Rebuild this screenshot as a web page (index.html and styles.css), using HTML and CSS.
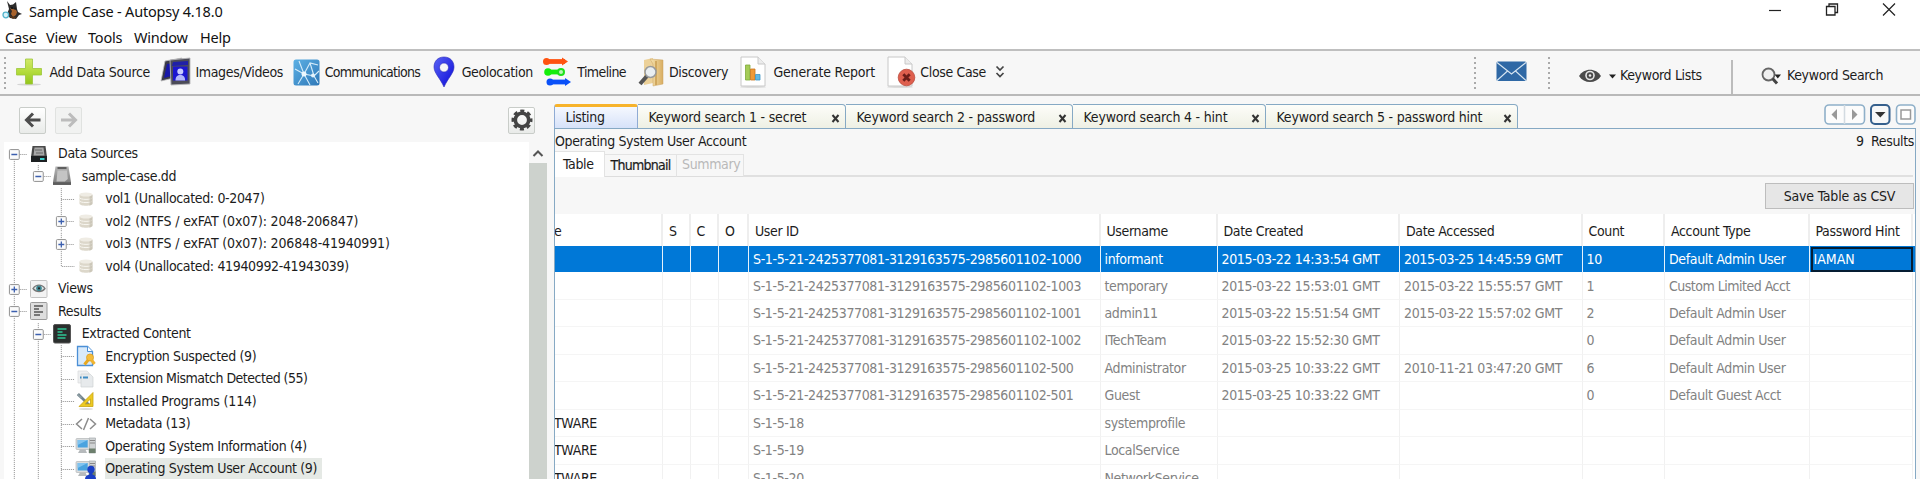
FILE: index.html
```html
<!DOCTYPE html>
<html lang="en">
<head>
<meta charset="utf-8">
<title>Sample Case - Autopsy 4.18.0</title>
<link rel="stylesheet" href="styles.css">
</head>
<body>
<svg class="defs" aria-hidden="true">
  <defs>
    <linearGradient id="gGreen" x1="0" y1="0" x2="0" y2="1"><stop offset="0" stop-color="#d2e96a"/><stop offset=".5" stop-color="#b4dc3c"/><stop offset="1" stop-color="#93c51c"/></linearGradient>
    <linearGradient id="gSky" x1="0" y1="0" x2="1" y2="1"><stop offset="0" stop-color="#5cb0e4"/><stop offset="1" stop-color="#2f78b8"/></linearGradient>
    <linearGradient id="gPin" x1="0" y1="0" x2="1" y2="1"><stop offset="0" stop-color="#5a62f4"/><stop offset="1" stop-color="#0a0ad8"/></linearGradient>
    <linearGradient id="gFold" x1="0" y1="0" x2="1" y2="0"><stop offset="0" stop-color="#f6e3b0"/><stop offset="1" stop-color="#d9ae62"/></linearGradient>
    <linearGradient id="gDisk" x1="0" y1="0" x2="0" y2="1"><stop offset="0" stop-color="#b5b5b5"/><stop offset="1" stop-color="#777"/></linearGradient>
    <symbol id="t-v" viewBox="0 0 24 22.5"><path class="dot" d="M10.5 0V22.5"/></symbol>
    <symbol id="t-tee" viewBox="0 0 24 22.5"><path class="dot" d="M10.5 0V22.5M10.5 11.5H24"/></symbol>
    <symbol id="t-end" viewBox="0 0 24 22.5"><path class="dot" d="M10.5 0V11.5H24"/></symbol>
    <symbol id="t-box" viewBox="0 0 24 22.5"><path class="dot" d="M16 11.5H24"/><rect x="5.5" y="6.5" width="10" height="10" rx="1" fill="#fbfbfb" stroke="#8f8f8f"/><path d="M7.500 11.5H13.5" stroke="#3c5fae" stroke-width="1.3"/></symbol>
    <symbol id="t-first" viewBox="0 0 24 22.5"><path class="dot" d="M10.5 16V22.5"/><use href="#t-box"/></symbol>
    <symbol id="t-minus" viewBox="0 0 24 22.5"><path class="dot" d="M10.5 0V22.5"/><use href="#t-box"/></symbol>
    <symbol id="t-last" viewBox="0 0 24 22.5"><path class="dot" d="M10.5 0V7"/><use href="#t-box"/></symbol>
    <symbol id="t-plus" viewBox="0 0 24 22.5"><path class="dot" d="M10.5 0V22.5"/><use href="#t-box"/><path d="M10.5 8.5V14.5" stroke="#3c5fae" stroke-width="1.3"/></symbol>
    <symbol id="i-vol" viewBox="0 0 22 22"><path d="M4.500 6.500v9c0 3 13 3 13 0v-9" fill="#dcd7ca"/><ellipse cx="11" cy="6.500" rx="6.500" ry="2" fill="#efece4"/><path d="M4.500 9.500c0 2.500 13 2.500 13 0M4.500 12.700c0 2.500 13 2.500 13 0" fill="none" stroke="#f8f6f0"/><path d="M17.500 7v8.500c0 1-1.500 1.800-3 2V8.700z" fill="#c2bcae" opacity=".6"/></symbol>
    <symbol id="i-pc" viewBox="0 0 22 22"><path d="M14 3h6.500v15h-6.500z" fill="#d0d3d4" stroke="#a5aaad" stroke-width=".7"/><path d="M14.500 5.500h5.500M14.500 8h5.500" stroke="#888"/><rect x="1" y="3.500" width="13.500" height="11" rx="1" fill="#d9dcdd" stroke="#a9adaf" stroke-width=".6"/><rect x="2.700" y="5" width="10" height="7.500" fill="#4aa3df"/><path d="M2.700 5h10l-10 5z" fill="#80c3ef"/><path d="M5 14.500h5.500l1.500 3.500H3z" fill="#b6babc"/><path d="M14 13.500h6.500v4.500h-6.500z" fill="#6d7f6d"/></symbol>
  </defs>
</svg>
<div class="window">
  <header class="titlebar">
    <svg class="dog" width="20" height="20" viewBox="0 0 20 20"><path d="M5 1l3 4 3-.5L14 2l1 7 1 3 4 2-3 1-3 4-6-1-3-4 2-5z" fill="#2c2b2b"/><path d="M8 8l2 3-1 3 2 3 3-2 1-3-1-2z" fill="#a8622c"/><path d="M9 8h2M12.500 8.500h1" stroke="#111" stroke-width="1.500"/><path d="M7 16l8 1-4 2z" fill="#5a3518"/><circle cx="3.800" cy="15" r="2.800" fill="#d9f3fa" stroke="#54b4cc" stroke-width="1.300"/></svg>
    <span class="title">Sample Case - Autopsy 4.18.0</span>
    <div class="winbtns">
      <svg width="14" height="16" viewBox="0 0 14 16"><path d="M1 10.500H13" stroke="#222" stroke-width="1.200"/></svg>
      <svg width="14" height="16" viewBox="0 0 14 16"><path d="M1.500 6.500h8.500v8.500h-8.500zM4 6.500V4h8.500v8.500H10" fill="none" stroke="#222" stroke-width="1.300"/></svg>
      <svg width="14" height="16" viewBox="0 0 14 16"><path d="M1 3.500L13 15.500M13 3.500L1 15.500" stroke="#222" stroke-width="1.200"/></svg>
    </div>
  </header>
  <nav class="menubar"><span class="m1">Case</span><span class="m2">View</span><span class="m3">Tools</span><span class="m4">Window</span><span class="m5">Help</span></nav>

  <div class="toolbar">
    <i class="grip"></i>
    <div class="tools">
      <div class="tool w1"><svg width="26" height="30" viewBox="0 0 26 30"><ellipse cx="13" cy="27.500" rx="12" ry="1" fill="#d5d5d5"/><path d="M9.500 2h7v9.500h9v6.500h-9v9h-7v-9h-9v-6.500h9z" fill="url(#gGreen)" stroke="#9cc63a" stroke-width=".8"/></svg><span>Add Data Source</span></div>
      <div class="tool w2"><svg width="32" height="32" viewBox="0 0 32 32"><path d="M5 5L22 2l-4 19L1 25z" fill="#3a3a48" stroke="#bbb" stroke-width=".8"/><path d="M7 8L18 6 15 19 4 22z" fill="#1717a8"/><path d="M10 4L30 2 30 28 11 29z" fill="#4c4c58" stroke="#b5b5b9" stroke-width=".9"/><path d="M13 6L28 5V9L12 10z" fill="#2020a8"/><rect x="13" y="10.500" width="14.500" height="14" fill="#1c16d0"/><circle cx="20.300" cy="15.500" r="3" fill="#c9ccff"/><path d="M15.500 24.500c0-4 2-5.500 4.800-5.500s4.800 1.500 4.800 5.500z" fill="#b4b8fb"/></svg><span>Images/Videos</span></div>
      <div class="tool w3"><svg width="27" height="30" viewBox="0 0 27 30"><rect x=".5" y="2.500" width="26" height="26" rx="2.500" fill="url(#gSky)"/><path d="M2 12l9 5 6-11 8 2M11 17l-6 10M11 17l10 2 4 7M17 6l4 13 5-5M11 17L6 4M11 17l6 11" fill="none" stroke="#d5ecfa" stroke-width="1.100"/><circle cx="11" cy="17" r="2.500" fill="#eef8fe"/><circle cx="20" cy="18.500" r="2" fill="#e4f3fc"/></svg><span>Communications</span></div>
      <div class="tool w4"><svg width="22" height="32" viewBox="0 0 22 32"><path fill-rule="evenodd" d="M11 1C5 1 1 5 1 11c0 6 6 11 10 20 4-9 10-14 10-20C21 5 17 1 11 1zM11 7a4.500 4.500 0 1 1 0 9 4.500 4.500 0 0 1 0-9z" fill="url(#gPin)" stroke="#2828b8" stroke-width=".6"/></svg><span>Geolocation</span></div>
      <div class="tool w5"><svg width="28" height="32" viewBox="0 0 28 32"><g stroke-width="4.800" fill="none"><path d="M3 5.500H22" stroke="#ff5310"/><path d="M5 16H18" stroke="#15ee0c"/><path d="M6 26H24" stroke="#0a50f8"/></g><path d="M19 1.500l6 4-6 4z" fill="#ff5310"/><path d="M22 22l6 4-6 4z" fill="#0a50f8"/><circle cx="3.500" cy="5.500" r="3.500" fill="#ff5310"/><circle cx="5" cy="16" r="3.800" fill="#15ee0c"/><circle cx="18" cy="16" r="3" fill="#b9f6b5" stroke="#1ee01a" stroke-width="2"/><circle cx="7" cy="26" r="3.500" fill="#0a50f8"/></svg><span>Timeline</span></div>
      <div class="tool w6"><svg width="28" height="32" viewBox="0 0 28 32"><path d="M6 4l9-2v25l-9 2z" fill="#ecd199"/><path d="M12 3l13 1v24l-10 2V8z" fill="url(#gFold)" stroke="#caa360" stroke-width=".5"/><path d="M18 5v24" stroke="#c99c50" stroke-width="1.500"/><path d="M9 20l-7 8" stroke="#555" stroke-width="4"/><circle cx="12.500" cy="16" r="5.500" fill="#e9eef1" stroke="#989a9c" stroke-width="1.500"/></svg><span>Discovery</span></div>
      <div class="tool w7"><svg width="26" height="32" viewBox="0 0 26 32"><ellipse cx="13" cy="31" rx="13" ry="1" fill="#ddd"/><path d="M1 1h17l7 7v22H1z" fill="#fff" stroke="#c8c8c8"/><path d="M18 1v7h7" fill="#ececec" stroke="#c8c8c8"/><path d="M5.500 9h4.500v15h-4.500z" fill="#a5cc57" stroke="#7fa93a" stroke-width=".8"/><path d="M10.500 13h4.500v11h-4.500z" fill="#f09a38" stroke="#c97720" stroke-width=".8"/><path d="M15.500 18.500h4.500V24h-4.500z" fill="#62b8e4" stroke="#3f95c3" stroke-width=".8"/></svg><span>Generate Report</span></div>
      <div class="tool w8"><svg width="29" height="32" viewBox="0 0 29 32"><ellipse cx="13" cy="31" rx="13" ry="1" fill="#ddd"/><path d="M1 1h17l7 7v22H1z" fill="#fff" stroke="#c8c8c8"/><path d="M18 1v7h7" fill="#ececec" stroke="#c8c8c8"/><circle cx="19.500" cy="21.500" r="8.300" fill="#df5f4e" stroke="#b94a3c" stroke-width=".8"/><path d="M16.300 18.300l6.400 6.400M22.700 18.300l-6.400 6.400" stroke="#6c1d18" stroke-width="2.800"/></svg><span>Close Case</span></div>
    </div>
    <svg class="more" width="10" height="14" viewBox="0 0 10 14"><path d="M1.500 1.500l3.500 3.500 3.500-3.500M1.500 8l3.500 3.500 3.500-3.500" fill="none" stroke="#444" stroke-width="1.700"/></svg>
    <div class="toolright">
      <i class="grip"></i>
      <svg class="mail" width="31" height="21" viewBox="0 0 31 21"><rect x=".5" y=".5" width="30" height="19.500" rx="1.500" fill="#2f68a5"/><path d="M1 1.500L15.500 13 30 1.500M1 19.500l10.500-9.500M30 19.500L19.500 10" fill="none" stroke="#d8e6f2" stroke-width="1.100"/></svg>
      <i class="grip"></i>
      <svg class="eye" width="38" height="14" viewBox="0 0 38 14"><path d="M0 7C5-1.500 17-1.500 22 7 17 15 5 15 0 7z" fill="#4a4a4a"/><circle cx="11" cy="6.500" r="4.800" fill="#e5e5e5"/><circle cx="11" cy="6.500" r="3.200" fill="#4a4a4a"/><circle cx="11" cy="6.500" r="1.300" fill="#eee"/><path d="M30 5.500h7L33.500 9.500z" fill="#222"/></svg>
      <span class="kwl">Keyword Lists</span>
      <i class="sep"></i>
      <svg class="mag" width="21" height="18" viewBox="0 0 21 18"><circle cx="7.500" cy="7.500" r="6" fill="#f0f0f0" stroke="#666" stroke-width="1.800"/><path d="M11.500 11.500l4.500 5" stroke="#444" stroke-width="3"/><path d="M13.500 7.500h6.500L16.800 11.500z" fill="#222"/></svg>
      <span class="kws">Keyword Search</span>
    </div>
  </div>

  <main class="main">
    <section class="left">
      <div class="navrow">
        <button class="sq"><svg width="26" height="26" viewBox="0 0 26 26"><path d="M20.500 13H7M13 6.500L6.500 13l6.500 6.500" fill="none" stroke="#4d4d4d" stroke-width="3"/></svg></button>
        <button class="sq off"><svg width="26" height="26" viewBox="0 0 26 26"><path d="M5 13H19M13 6.500L19.500 13l-6.500 6.500" fill="none" stroke="#bcbcbc" stroke-width="3"/></svg></button>
        <button class="sq gear"><svg width="26" height="26" viewBox="0 0 26 26"><circle cx="13" cy="13" r="9" fill="none" stroke="#444" stroke-width="3" stroke-dasharray="4 3.070" stroke-dashoffset="2"/><circle cx="13" cy="13" r="6.700" fill="none" stroke="#444" stroke-width="3.600"/></svg></button>
      </div>
      <div class="treewrap">
        <div class="tree">
          <div class="row"><svg class="g"><use href="#t-first"/></svg><svg class="ic" viewBox="0 0 22 22"><path d="M4.500 3h13l1.500 11H3z" fill="#4a4a4a"/><path d="M6.500 4.500h9l1 8H5.500z" fill="#a8a8a8"/><path d="M3 13h16v6H3z" fill="#1d2022"/><path d="M12 16h4.500" stroke="#3fd0cc" stroke-width="2"/><path d="M7 7h7M8 10h7" stroke="#666"/></svg><span>Data Sources</span></div>
          <div class="row"><svg class="g"><use href="#t-v"/></svg><svg class="g"><use href="#t-last"/></svg><svg class="ic" viewBox="0 0 22 22"><path d="M4.500 1.500h13L20 17v3H2v-3z" fill="url(#gDisk)"/><path d="M6.500 3h9" stroke="#444" stroke-width="1.500"/><path d="M6.500 5.500h9.500l.8 8.500-3 2.500H5.500z" fill="#c4c4c4"/><path d="M2 18.500h18" stroke="#5d5d5d" stroke-width="2.500"/></svg><span>sample-case.dd</span></div>
          <div class="row"><svg class="g"><use href="#t-v"/></svg><svg class="g"></svg><svg class="g"><use href="#t-tee"/></svg><svg class="ic"><use href="#i-vol"/></svg><span>vol1 (Unallocated: 0-2047)</span></div>
          <div class="row"><svg class="g"><use href="#t-v"/></svg><svg class="g"></svg><svg class="g"><use href="#t-plus"/></svg><svg class="ic"><use href="#i-vol"/></svg><span class="wide">vol2 (NTFS / exFAT (0x07): 2048-206847)</span></div>
          <div class="row"><svg class="g"><use href="#t-v"/></svg><svg class="g"></svg><svg class="g"><use href="#t-plus"/></svg><svg class="ic"><use href="#i-vol"/></svg><span class="wide">vol3 (NTFS / exFAT (0x07): 206848-41940991)</span></div>
          <div class="row"><svg class="g"><use href="#t-v"/></svg><svg class="g"></svg><svg class="g"><use href="#t-end"/></svg><svg class="ic"><use href="#i-vol"/></svg><span>vol4 (Unallocated: 41940992-41943039)</span></div>
          <div class="row"><svg class="g"><use href="#t-plus"/></svg><svg class="ic" viewBox="0 0 22 22"><rect x="2.500" y="2.500" width="16.500" height="17" rx="1" fill="#f3f3f3" stroke="#c3c3c3"/><path d="M5 10.500c3-4.500 9-4.500 12 0-3 4-9 4-12 0z" fill="#dfe6e6" stroke="#777" stroke-width="1.300"/><circle cx="11" cy="10.300" r="2.800" fill="#3d8792"/><circle cx="11" cy="10.300" r="1.100" fill="#222"/></svg><span>Views</span></div>
          <div class="row"><svg class="g"><use href="#t-minus"/></svg><svg class="ic" viewBox="0 0 22 22"><rect x="2.500" y="2.500" width="16.500" height="17" rx="1" fill="#dedede" stroke="#9b9b9b"/><path d="M6 6h9M6 9h5M6 12h9M6 15h6" stroke="#555" stroke-width="1.600"/></svg><span>Results</span></div>
          <div class="row"><svg class="g"><use href="#t-v"/></svg><svg class="g"><use href="#t-minus"/></svg><svg class="ic" viewBox="0 0 22 22"><rect x="2.500" y="1.500" width="17" height="18.500" rx="1.500" fill="#2b2e2d" stroke="#555"/><path d="M6.500 6h9M6.500 9h5M6.500 12h9M6.500 15h8" stroke="#2fc795" stroke-width="1.700"/></svg><span>Extracted Content</span></div>
          <div class="row"><svg class="g"><use href="#t-v"/></svg><svg class="g"><use href="#t-v"/></svg><svg class="g"><use href="#t-tee"/></svg><svg class="ic" viewBox="0 0 22 22"><path d="M2.500 1.500h10l5 5v14h-15z" fill="#d9eafa" stroke="#4b8fd6" stroke-width="1.300"/><path d="M12.500 1.500v5h5" fill="#fff" stroke="#4b8fd6"/><path d="M14 14l-4.500 5.500" stroke="#e8a820" stroke-width="3"/><circle cx="15" cy="12.500" r="3.500" fill="#f4bd3c" stroke="#e0a020" stroke-width=".8"/><path d="M16.500 15l3 4" stroke="#f0b430" stroke-width="3"/></svg><span>Encryption Suspected (9)</span></div>
          <div class="row"><svg class="g"><use href="#t-v"/></svg><svg class="g"><use href="#t-v"/></svg><svg class="g"><use href="#t-tee"/></svg><svg class="ic" viewBox="0 0 22 22"><path d="M3 3h9l2 2v10H3z" fill="#eef0f1" stroke="#d8dadb" stroke-width=".7"/><path d="M6 6h9l3 3v10H6z" fill="#e7eaec" stroke="#cfd2d4" stroke-width=".7"/><path d="M5 9.500h1.500M8 9.500h5" stroke="#3f8cc4" stroke-width="2"/></svg><span class="tight">Extension Mismatch Detected (55)</span></div>
          <div class="row"><svg class="g"><use href="#t-v"/></svg><svg class="g"><use href="#t-v"/></svg><svg class="g"><use href="#t-tee"/></svg><svg class="ic" viewBox="0 0 22 22"><ellipse cx="11" cy="19" rx="7" ry="1" fill="#ddd"/><path d="M3 4l12 12" stroke="#71838b" stroke-width="2.600"/><path fill-rule="evenodd" d="M18 2.500v14H4zM15.500 9v5H10z" fill="#ecc922" stroke="#c9a514" stroke-width=".8"/><path d="M2.500 4.500l4 3.500" stroke="#8b9ba2" stroke-width="2"/></svg><span class="wide">Installed Programs (114)</span></div>
          <div class="row"><svg class="g"><use href="#t-v"/></svg><svg class="g"><use href="#t-v"/></svg><svg class="g"><use href="#t-tee"/></svg><svg class="ic" viewBox="0 0 22 22"><path d="M7 6l-5.500 5L7 16M15 6l5.500 5-5.500 5M13.500 5L8.500 17" fill="none" stroke="#8c8c8c" stroke-width="1.500"/></svg><span>Metadata (13)</span></div>
          <div class="row"><svg class="g"><use href="#t-v"/></svg><svg class="g"><use href="#t-v"/></svg><svg class="g"><use href="#t-tee"/></svg><svg class="ic"><use href="#i-pc"/></svg><span>Operating System Information (4)</span></div>
          <div class="row"><svg class="g"><use href="#t-v"/></svg><svg class="g"><use href="#t-v"/></svg><svg class="g"><use href="#t-tee"/></svg><svg class="ic" viewBox="0 0 22 22"><use href="#i-pc"/><circle cx="16" cy="11.500" r="3.700" fill="#1a3fc4"/><path d="M10 21.500c0-4 3-5 6-5s5 1 5 5z" fill="#1a3fc4"/><path d="M14.500 14h3v4h-3z" fill="#1a3fc4"/></svg><span class="sel">Operating System User Account (9)</span></div>
        </div>
        <div class="scroll"><svg width="18" height="21" viewBox="0 0 18 21"><path d="M4.500 14l4.500-4.500 4.500 4.500" fill="none" stroke="#555" stroke-width="2"/></svg></div>
      </div>
    </section>

    <section class="right">
      <div class="tabs">
        <div class="tab active"><span>Listing</span></div>
        <div class="tab k1"><span>Keyword search 1 - secret</span><svg width="9" height="9" viewBox="0 0 9 9"><path d="M1.500 1l6 7M7.500 1l-6 7" stroke="#333" stroke-width="2"/></svg></div>
        <div class="tab k2"><span>Keyword search 2 - password</span><svg width="9" height="9" viewBox="0 0 9 9"><path d="M1.500 1l6 7M7.500 1l-6 7" stroke="#333" stroke-width="2"/></svg></div>
        <div class="tab k3"><span>Keyword search 4 - hint</span><svg width="9" height="9" viewBox="0 0 9 9"><path d="M1.500 1l6 7M7.500 1l-6 7" stroke="#333" stroke-width="2"/></svg></div>
        <div class="tab k4"><span>Keyword search 5 - password hint</span><svg width="9" height="9" viewBox="0 0 9 9"><path d="M1.500 1l6 7M7.500 1l-6 7" stroke="#333" stroke-width="2"/></svg></div>
        <svg class="tabctl" width="92" height="21" viewBox="0 0 92 21"><g fill="#fcfcfc" stroke="#8fb0c9" stroke-width="1.600"><rect x="1" y="1" width="39.500" height="19" rx="4"/><rect x="72.500" y="1" width="18.500" height="19" rx="4"/></g><path d="M20.500 1v19" stroke="#d3dbe1" stroke-width="1.500"/><path d="M13 5v11L7.500 10.500zM28 5v11l5.500-5.500z" fill="#999"/><rect x="47" y="1" width="18.500" height="19" rx="4" fill="#f8f8f8" stroke="#36608d" stroke-width="2"/><path d="M51 8h10.500L56.300 13.500z" fill="#333"/><rect x="77" y="6" width="9.500" height="9" fill="#fff" stroke="#999" stroke-width="1.500"/></svg>
      </div>
      <div class="panel">
        <div class="info"><span>Operating System User Account</span><span class="results">9&nbsp; Results</span></div>
        <div class="subtabs"><span class="on">Table</span><span class="thumb">Thumbnail</span><span class="dis">Summary</span><i></i></div>
        <div class="actions"><button class="csv">Save Table as CSV</button></div>
        <div class="grid head"><span class="clip">e</span><span>S</span><span>C</span><span>O</span><span>User ID</span><span>Username</span><span>Date Created</span><span>Date Accessed</span><span>Count</span><span>Account Type</span><span>Password Hint</span></div>
        <div class="grid body picked"><span></span><span></span><span></span><span></span><span>S-1-5-21-2425377081-3129163575-2985601102-1000</span><span>informant</span><span>2015-03-22 14:33:54 GMT</span><span>2015-03-25 14:45:59 GMT</span><span>10</span><span>Default Admin User</span><span class="focus">IAMAN</span></div>
        <div class="grid body"><span></span><span></span><span></span><span></span><span>S-1-5-21-2425377081-3129163575-2985601102-1003</span><span>temporary</span><span>2015-03-22 15:53:01 GMT</span><span>2015-03-22 15:55:57 GMT</span><span>1</span><span class="tight">Custom Limited Acct</span><span></span></div>
        <div class="grid body"><span></span><span></span><span></span><span></span><span>S-1-5-21-2425377081-3129163575-2985601102-1001</span><span>admin11</span><span>2015-03-22 15:51:54 GMT</span><span>2015-03-22 15:57:02 GMT</span><span>2</span><span>Default Admin User</span><span></span></div>
        <div class="grid body"><span></span><span></span><span></span><span></span><span>S-1-5-21-2425377081-3129163575-2985601102-1002</span><span>ITechTeam</span><span>2015-03-22 15:52:30 GMT</span><span></span><span>0</span><span>Default Admin User</span><span></span></div>
        <div class="grid body"><span></span><span></span><span></span><span></span><span>S-1-5-21-2425377081-3129163575-2985601102-500</span><span>Administrator</span><span>2015-03-25 10:33:22 GMT</span><span>2010-11-21 03:47:20 GMT</span><span>6</span><span>Default Admin User</span><span></span></div>
        <div class="grid body"><span></span><span></span><span></span><span></span><span>S-1-5-21-2425377081-3129163575-2985601102-501</span><span>Guest</span><span>2015-03-25 10:33:22 GMT</span><span></span><span>0</span><span>Default Guest Acct</span><span></span></div>
        <div class="grid body"><span class="clip">TWARE</span><span></span><span></span><span></span><span>S-1-5-18</span><span>systemprofile</span><span></span><span></span><span></span><span></span><span></span></div>
        <div class="grid body"><span class="clip">TWARE</span><span></span><span></span><span></span><span>S-1-5-19</span><span>LocalService</span><span></span><span></span><span></span><span></span><span></span></div>
        <div class="grid body"><span class="clip">TWARE</span><span></span><span></span><span></span><span>S-1-5-20</span><span>NetworkService</span><span></span><span></span><span></span><span></span><span></span></div>
      </div>
    </section>
  </main>
</div>
</body>
</html>
```
FILE: styles.css
```css
* { box-sizing: border-box; }
body { margin: 0; background: #fff; color: #1c1c1c; font: 14px/18px "DejaVu Sans Condensed", "DejaVu Sans", sans-serif; font-stretch: condensed; letter-spacing: -0.35px; white-space: nowrap; overflow: hidden; }
svg { display: block; flex: none; }
button { font: inherit; letter-spacing: inherit; color: inherit; padding: 0; }
.defs { position: absolute; width: 0; height: 0; }
.dot { fill: none; stroke: #8c8c8c; stroke-width: 1; stroke-dasharray: 1 1; }
.wide { letter-spacing: -0.16px; }
.tight { letter-spacing: -0.5px; }
.window { width: 1920px; height: 479px; overflow: hidden; display: flex; flex-direction: column; background: #f7f7f7; }

.titlebar { height: 25px; flex: none; display: flex; background: #fff; padding-left: 2px; font-family: "Noto Sans", sans-serif; font-stretch: normal; font-size: 14.5px; letter-spacing: -0.2px; color: #111; }
.title { margin: 2px 0 0 7px; }
.winbtns { margin-left: auto; display: flex; gap: 43px; padding-right: 24px; }
.menubar { height: 24px; flex: none; display: flex; background: #fff; padding-left: 5px; line-height: 25px; font-family: "Noto Sans", sans-serif; font-stretch: normal; font-size: 14.5px; letter-spacing: -0.2px; color: #111; }
.m1 { width: 41px; } .m2 { width: 42px; } .m3 { width: 46px; } .m4 { width: 66px; }

.toolbar { height: 47px; flex: none; display: flex; border-top: 2px solid #bfbfbf; border-bottom: 2px solid #b9b9b9; }
.grip { width: 2px; height: 34px; margin: 6px 0 0 4px; flex: none; background: repeating-linear-gradient(#aaa 0 2px, transparent 2px 5px); }
.tools { display: flex; margin-left: 10px; }
.tool { display: flex; align-items: center; height: 43px; }
.tool span { margin: -1px 0 0 auto; }
.tool svg { margin-top: -1px; }
.w1 { width: 134px; } .w2 { width: 123px; margin-left: 10px; } .w3 { width: 127px; margin-left: 10px; letter-spacing: -0.75px; }
.w4 { width: 100px; margin-left: 13px; } .w5 { width: 83px; margin-left: 10px; letter-spacing: -0.6px; } .w6 { width: 90px; margin-left: 12px; }
.w7 { width: 135px; margin-left: 12px; letter-spacing: -0.2px; } .w8 { width: 99px; margin-left: 12px; }
.more { margin: 14px 0 0 9px; }
.toolright { margin-left: auto; display: flex; width: 450px; }
.toolright > .grip { margin-left: 4px; }
.mail { margin: 10px 0 0 20px; }
.toolright > .mail + .grip { margin-left: 21px; }
.eye { margin: 18px 0 0 29px; }
.kwl, .kws { line-height: 49px; }
.kwl { margin-left: 3px; width: 84px; }
.sep { width: 2px; height: 34px; margin: 9px 0 0 27px; background: #bcbcbc; }
.mag { margin: 16px 0 0 28px; }
.kws { margin-left: 5px; }

.main { flex: 1; display: flex; min-height: 0; }
.left { width: 554px; flex: none; display: flex; flex-direction: column; }
.navrow { height: 46px; flex: none; display: flex; padding: 11px 0 0 19px; }
.sq { width: 27px; height: 27px; border: 1px solid #c9cdc9; border-radius: 2px; background: linear-gradient(#fff, #e9ebe9); margin-right: 9px; }
.sq svg { margin-left: -0.5px; margin-top: -1px; }
.off { border-color: #e0e2e0; background: #f1f2f1; }
.gear { margin: 0 19px 0 auto; }
.treewrap { flex: 1; display: flex; margin-left: 4px; min-height: 0; }
.tree { width: 525px; background: #fff; overflow: hidden; padding-top: .6px; }
.row { height: 22.5px; display: flex; align-items: center; }
.g { width: 23.6px; height: 22.5px; }
.ic { width: 22px; height: 22px; margin-right: 8px; }
.row span { line-height: 21px; margin-left: .5px; }
.sel { background: #e5e9e5; padding-right: 5px; }
.scroll { width: 18px; background: linear-gradient(#f7f7f7 21px, #cdd2cd 21px); }

.right { width: 1362px; display: flex; flex-direction: column; }
.tabs { height: 33px; flex: none; display: flex; padding-top: 8px; margin-bottom: -1px; letter-spacing: -0.2px; }
.tab { height: 25px; border: 1.5px solid #86a9c4; border-left-width: 0; border-radius: 0 4px 0 0; background: linear-gradient(#fdfdf9, #eef0e4); display: flex; align-items: center; padding-left: 10.5px; }
.tab svg { margin: 3px 5px 0 auto; }
.active { width: 84px; border: 1px solid #8fabd4; border-top: 3px solid #f7b32b; border-bottom: 0; border-radius: 3px 3px 0 0; background: linear-gradient(#f5f8fe, #d5e1f9); letter-spacing: -0.35px; }
.active span { margin-top: -2px; }
.k1 { width: 208px; } .k2 { width: 227px; } .k3 { width: 193px; } .k4 { width: 252px; }
.tabctl { margin: 0 0 0 auto; }
.panel { flex: 1; min-height: 0; border: 1.5px solid #86a9c4; border-top-width: 1px; border-bottom: 0; overflow: hidden; }
.info { height: 22px; display: flex; justify-content: space-between; line-height: 25px; padding-right: 1px; }
.subtabs { height: 26px; display: flex; align-items: flex-end; }
.subtabs span { border: 1.5px solid #e3e3e3; border-left: 0; border-bottom-color: #ddd; line-height: 21px; height: 23px; padding-left: 6px; }
.subtabs .on { width: 50px; height: 26px; line-height: 24px; background: #fff; border-bottom: 0; padding-left: 8px; }
.subtabs .thumb { width: 72px; padding-left: 5.5px; letter-spacing: -0.75px; -webkit-text-stroke: 0.2px #1c1c1c; }
.subtabs .dis { width: 67px; padding-left: 5px; color: #b9b9b9; line-height: 19px; }
.subtabs i { flex: 1; height: 2px; background: #e0e0e0; margin-right: 2px; }
.actions { height: 37px; display: flex; justify-content: flex-end; padding: 6px 1px 0 0; }
.csv { width: 149px; height: 26px; border: 1.5px solid #bdbdbd; background: #e6e6e6; letter-spacing: -0.2px; }
.grid { display: grid; grid-template-columns: 108px 27.5px 28.5px 30px 351.5px 117px 182.5px 182.5px 82.500px 144.500px 103.500px; }
.grid span { overflow: hidden; border-right: 1px solid #f1f1f1; }
.head { height: 31.500px; background: #fff; line-height: 34px; }
.head span { padding-left: 6px; border-right: 2px solid #eee; }
.grid .clip { padding-left: 0; color: #1c1c1c; text-indent: -1px; }
.body { height: 27.450px; background: #fff; color: #828282; line-height: 27px; }
.body span { padding-left: 4px; border-bottom: 1.500px solid #f5f5f5; }
.picked { height: 27px; color: #fff; background: linear-gradient(#0078d7 26.500px, #fff 26.500px); }
.picked span { border-right-color: #e6f2fb; border-bottom: 0; }
.picked .focus { border: 2px solid #051d33; padding-left: 1px; height: 25px; line-height: 21px; margin: 1px 0 0 1px; letter-spacing: 0; }
```
